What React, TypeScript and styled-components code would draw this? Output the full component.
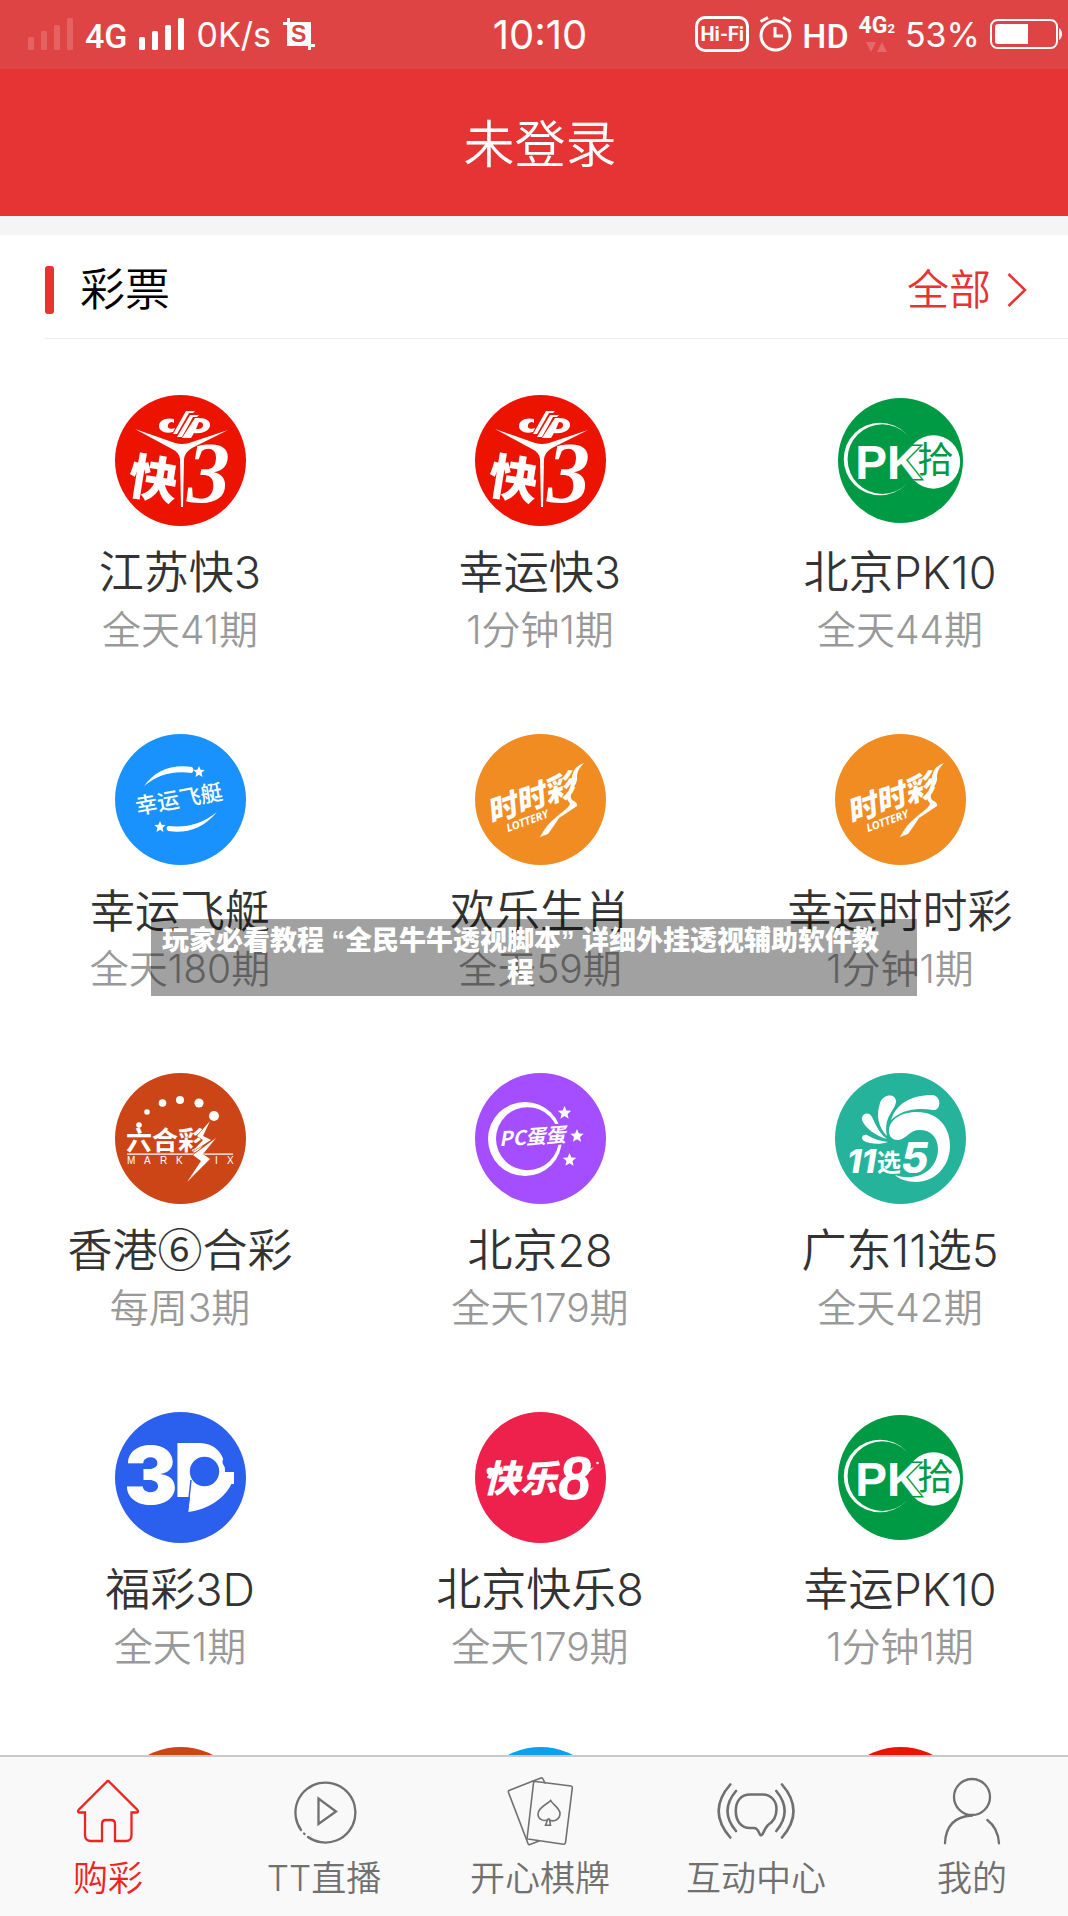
import React, { FC, ReactNode } from 'react'
import styled, { createGlobalStyle, css } from 'styled-components'

const colors = {
  red: '#e63333',
  statusRed: '#df4444',
  active: '#f02222',
  inactive: '#707070',
  text: '#333333',
  muted: '#999999',
}

const cjk = `'Noto Sans CJK SC', sans-serif`

const starPoints = (cx: number, cy: number, r: number) =>
  Array.from({ length: 10 }, (_, i) => {
    const radius = i % 2 ? r * 0.45 : r
    const angle = (Math.PI / 5) * i - Math.PI / 2
    return `${(cx + radius * Math.cos(angle)).toFixed(1)},${(cy + radius * Math.sin(angle)).toFixed(1)}`
  }).join(' ')

/* ---------- lottery logos ---------- */

const KuaiSanLogo = () => (
  <>
    <circle cx="65.5" cy="65.5" r="65.5" fill="#ec1300" />
    <path d="M59 24C50 22 44 26 44 31C44 36 50 39 58 37L60 33C55 35 52 33 53 30C54 27 57 26 59 28Z" />
    <path d="M71 16H80L78 18H74L62 39H58Z" />
    <path d="M75 20H84L82 22H78L67 42H62Z" />
    <path
      fillRule="evenodd"
      d="M80 23H84C91 23 96 26 95 31C94 36 87 39 79 38L76 43H67ZM84 27L81 34C86 34 88 33 88 30C88 28 87 27 84 27Z"
    />
    <path d="M20 34L60 48Q67 50 74 48L113 35L77 53Q70 57 69 64L68 112H66L65 64Q64 57 57 54Z" />
    <text x="14" y="102" fontSize="49" fontWeight="900" transform="rotate(9 40 84)">
      快
    </text>
    <text x="72" y="107" fontSize="86" fontWeight="700" fontStyle="italic" fontFamily="Liberation Serif, serif">
      3
    </text>
  </>
)

const PkLogo = () => (
  <>
    <circle cx="65.5" cy="65.5" r="65.5" fill="#009a44" />
    <circle cx="44" cy="64" r="38" />
    <circle cx="46.5" cy="64" r="36.5" fill="#009a44" />
    <circle cx="100" cy="67" r="28" />
    <text
      x="18"
      y="85"
      fontSize="50"
      fontWeight="700"
      fontFamily="Liberation Sans, sans-serif"
      stroke="#009a44"
      strokeWidth="3"
      paintOrder="stroke"
    >
      PK
    </text>
    <text x="83" y="79" fontSize="38" fontWeight="400" fill="#009a44">
      拾
    </text>
  </>
)

const FeitingLogo = () => (
  <>
    <circle cx="65.5" cy="65.5" r="65.5" fill="#1a92fd" />
    <path d="M29 52C40 37 56 30 77 33Q80 36 77 39C58 36 42 41 29 52Z" />
    <polygon points={starPoints(84, 38, 6)} />
    <text x="20" y="73" fontSize="22" fontWeight="500" transform="rotate(-10 64 65)">
      幸运飞艇
    </text>
    <polygon points={starPoints(45, 93, 6)} />
    <path d="M102 78C88 95 70 100 53 97Q50 94 53 92C72 94 87 90 102 78Z" />
  </>
)

const ShishicaiLogo = () => (
  <>
    <circle cx="65.5" cy="65.5" r="65.5" fill="#f18c23" />
    <text x="10" y="75" fontSize="30" fontWeight="900" fontStyle="italic" transform="rotate(-19 56 64)">
      时时彩
    </text>
    <text
      x="33"
      y="98"
      fontSize="11"
      fontWeight="700"
      fontStyle="italic"
      fontFamily="Noto Sans, sans-serif"
      transform="rotate(-20 33 98)"
    >
      LOTTERY
    </text>
    <path d="M109 29Q99 32 97 42Q96 52 93 60Q91 65 94 68Q97 70 90 76Q77 86 72 92Q67 99 65 103L73 100Q79 92 84 84L102 72Q103 69 97 66Q94 62 98 54Q103 48 102 42Q102 36 109 29Z" />
  </>
)

const MarkSixLogo = () => (
  <>
    <circle cx="65.5" cy="65.5" r="65.5" fill="#cb4516" />
    <circle cx="24" cy="52" r="2.8" />
    <circle cx="32" cy="39" r="2.8" />
    <circle cx="47.5" cy="30" r="3.8" />
    <circle cx="65" cy="27" r="4" />
    <circle cx="84" cy="30" r="4.6" />
    <circle cx="99" cy="43" r="5" />
    <text x="11" y="77" fontSize="26" fontWeight="700">
      六合彩
    </text>
    <path d="M12 80.5H118V81.7H12Z" />
    <g fontSize="10" fontFamily="Liberation Sans, sans-serif">
      <text x="12" y="91">M</text>
      <text x="29" y="91">A</text>
      <text x="45" y="91">R</text>
      <text x="61" y="91">K</text>
      <text x="100" y="91">I</text>
      <text x="112" y="91">X</text>
    </g>
    <path
      d="M95 48L82 63L88 67L77 79L96 67L88 63ZM101 65L78 82L86 88L72 109L95 86L88 81Z"
      stroke="#cb4516"
      strokeWidth="1"
      paintOrder="stroke"
    />
  </>
)

const PcLogo = () => (
  <>
    <circle cx="65.5" cy="65.5" r="65.5" fill="#a54eff" />
    <circle cx="50" cy="66" r="37" />
    <circle cx="52.5" cy="65.7" r="31.5" fill="#a54eff" />
    <path d="M70 52L92 50V71L70 73Z" fill="#a54eff" />
    <text x="24" y="71" fontSize="20" fontWeight="700" fontStyle="italic" transform="rotate(-4 58 64)">
      PC蛋蛋
    </text>
    <polygon points={starPoints(89.5, 40, 7)} />
    <polygon points={starPoints(102, 63, 7)} />
    <polygon points={starPoints(94.5, 87, 7)} />
  </>
)

const ElevenLogo = () => (
  <>
    <circle cx="65.5" cy="65.5" r="65.5" fill="#26b39b" />
    <path d="M53 69C45 72 35 71 29 68C25 65 28 61 32 62C39 66 45 68 53 69Z" />
    <path d="M52 66C41 63 30 55 27 47C26 40 34 38 37 44C41 52 44 60 52 66Z" />
    <path d="M52 63C43 54 41 42 45 30C48 21 60 20 61 28C61 37 48 43 52 63Z" />
    <path d="M56 47C61 32 74 22 98 22C107 24 106 38 98 37C78 34 66 38 56 47Z" />
    <path d="M54 56C56 45 68 39 82 39C103 39 115 54 115 73C115 94 99 109 81 109C72 109 64 106 60 102C85 110 103 95 103 76C103 64 95 57 85 57C74 57 73 65 64 67C57 68 53 62 54 56Z" />
    <g stroke="#26b39b" strokeWidth="2" paintOrder="stroke">
      <text x="12" y="100" fontSize="33" fontWeight="800" fontStyle="italic" fontFamily="Inter, sans-serif">
        11
      </text>
      <text x="42" y="98" fontSize="24" fontWeight="700">
        选
      </text>
      <text x="66" y="100" fontSize="42" fontWeight="800" fontStyle="italic" fontFamily="Inter, sans-serif">
        5
      </text>
    </g>
  </>
)

const ThreeDLogo = () => (
  <>
    <circle cx="65.5" cy="65.5" r="65.5" fill="#2b60ee" />
    <g fontWeight="900" fontFamily="Inter, sans-serif">
      <text x="9" y="92" fontSize="80">3</text>
      <text x="59" y="85" fontSize="74">D</text>
    </g>
    <path d="M72 38H98V76H72Z" />
    <path d="M77 70L73 100C92 98 112 86 118 68Z" />
    <path d="M98 60H119V72H98Z" />
    <circle cx="89.5" cy="59.5" r="14.7" fill="#2b60ee" />
    <circle cx="114" cy="50" r="6.5" fill="#2b60ee" />
    <path d="M76 68L72.5 100" stroke="#2b60ee" strokeWidth="1.5" />
  </>
)

const HappyEightLogo = () => (
  <>
    <circle cx="65.5" cy="65.5" r="65.5" fill="#ed214c" />
    <circle cx="15" cy="59" r="3.5" />
    <text x="8" y="80" fontSize="37" fontWeight="900" fontStyle="italic">
      快乐
    </text>
    <text
      x="84"
      y="86"
      fontSize="62"
      fontWeight="400"
      fontStyle="italic"
      fontFamily="Liberation Serif, serif"
      stroke="#fff"
      strokeWidth="3"
    >
      8
    </text>
    <path d="M106 62L119 55L113 61Z" />
    <circle cx="122.5" cy="51" r="1.3" />
  </>
)

const PlainLogo: FC<{ color: string }> = ({ color }) => (
  <circle cx="65.5" cy="65.5" r="65.5" fill={color} />
)

interface Lottery {
  id: string
  name?: ReactNode
  period?: string
  logo: ReactNode
  size?: number
}

const Enclosed = styled.span`
  font-family: ${cjk};
  line-height: 1;
`

const lotteries: Lottery[] = [
  { id: 'jsk3', name: '江苏快3', period: '全天41期', logo: <KuaiSanLogo /> },
  { id: 'xyk3', name: '幸运快3', period: '1分钟1期', logo: <KuaiSanLogo /> },
  { id: 'bjpk10', name: '北京PK10', period: '全天44期', logo: <PkLogo />, size: 125 },
  { id: 'xyft', name: '幸运飞艇', period: '全天180期', logo: <FeitingLogo /> },
  { id: 'hlsx', name: '欢乐生肖', period: '全天59期', logo: <ShishicaiLogo /> },
  { id: 'xyssc', name: '幸运时时彩', period: '1分钟1期', logo: <ShishicaiLogo /> },
  {
    id: 'lhc',
    name: (
      <>
        香港<Enclosed>⑥</Enclosed>合彩
      </>
    ),
    period: '每周3期',
    logo: <MarkSixLogo />,
  },
  { id: 'bj28', name: '北京28', period: '全天179期', logo: <PcLogo /> },
  { id: 'gd11x5', name: '广东11选5', period: '全天42期', logo: <ElevenLogo /> },
  { id: 'fc3d', name: '福彩3D', period: '全天1期', logo: <ThreeDLogo /> },
  { id: 'bjkl8', name: '北京快乐8', period: '全天179期', logo: <HappyEightLogo /> },
  { id: 'xypk10', name: '幸运PK10', period: '1分钟1期', logo: <PkLogo />, size: 125 },
  { id: 'more1', logo: <PlainLogo color="#cb4516" />, size: 139 },
  { id: 'more2', logo: <PlainLogo color="#0d9ff0" />, size: 139 },
  { id: 'more3', logo: <PlainLogo color="#ec1300" />, size: 139 },
]

const tabs: { label: string; icon: ReactNode }[] = [
  {
    label: '购彩',
    icon: (
      <path d="M38.5 6Q40 4 41.5 6L69.5 34Q71 36.5 68 36.5H63.5V59Q63.5 65 58 65H47V48Q47 44 43 44H38Q34 44 34 48V65H23Q17 65 17 59V36.5H12Q9 36.5 10.5 34Z" />
    ),
  },
  {
    label: 'TT直播',
    icon: (
      <>
        <path d="M24 61A30 30 0 1 0 17 54" />
        <path d="M20 57.5L20.5 58" />
        <path d="M34.5 22.5V48L52 35.5Z" />
      </>
    ),
  },
  {
    label: '开心棋牌',
    icon: (
      <g strokeWidth="1.6">
        <path d="M33 5L9 14.5Q8 15 8.5 16.5L28 67.5Q28.5 69 30 68.5L39 65" />
        <path d="M33 5L41 2Q42.5 1.5 43 3L45 7" />
        <path d="M35.5 5.5L71 10Q72.5 10.3 72.3 12L65.5 66.5Q65 68.5 63.5 68.3L28 63Q27 62.8 27.2 61.5L33.5 7Q33.8 5.3 35.5 5.5Z" />
        <path d="M50.7 24.5C48 28 38 31 38 38C38 44 45 46 48.5 43C52 47 60 44 60 37.5C60 32 53 29 50.7 24.5ZM48 43L45.5 49.3H50.5L49.5 43" />
      </g>
    ),
  },
  {
    label: '互动中心',
    icon: (
      <g strokeWidth="2.6">
        <path d="M34 18.5H47C55 18.5 60.5 25 60.5 33C60.5 42 57 46 52 49C48 53 47 59.5 45 59.5C43 59.5 43 52 38 52H34C25 52 19.8 45 19.8 35C19.8 25 25 18.5 34 18.5Z" />
        <path d="M20 15Q3 35 20 55M60.3 15Q77 35 60.3 55" />
        <path d="M14.3 8.5Q-9 35 14.3 61.5M66 8.5Q89 35 66 61.5" />
      </g>
    ),
  },
  {
    label: '我的',
    icon: (
      <>
        <circle cx="40" cy="21" r="18" />
        <path d="M40 39.5Q14 41 13 67.3" />
        <path d="M55.3 44Q66 52 67 67.3" />
      </>
    ),
  },
]

/* ---------- status bar ---------- */

const SignalBars: FC<{ dim?: boolean }> = ({ dim }) => (
  <svg width="45" height="32" viewBox="0 0 45 32" fill="#fff" opacity={dim ? 0.16 : 1}>
    <rect x="0" y="19" width="6" height="13" rx="1.5" />
    <rect x="13" y="13" width="6" height="19" rx="1.5" />
    <rect x="26" y="7" width="6" height="25" rx="1.5" />
    <rect x="39" y="0" width="6" height="32" rx="1.5" />
  </svg>
)

const ScreenshotIcon = () => (
  <svg width="32" height="32" viewBox="0 0 32 32" fill="#fff">
    <path d="M4 0H7V4H28V26H32V29H28V32H25V28H4V7H0V4H4Z" />
    <text
      x="8"
      y="24"
      fontSize="23"
      fontWeight="700"
      fontFamily="Liberation Sans, sans-serif"
      fill={colors.statusRed}
    >
      S
    </text>
  </svg>
)

const AlarmIcon = () => (
  <svg width="33" height="36" viewBox="0 0 33 36" fill="none" stroke="#fff" strokeWidth="3">
    <circle cx="16.5" cy="19.5" r="14.5" />
    <path d="M16 11V20H24M1.5 5.5L9 1.5M31.5 5.5L24 1.5" />
  </svg>
)

const ArrowsIcon = () => (
  <svg width="22" height="10" viewBox="0 0 22 10" fill="#fff" opacity="0.2">
    <path d="M0 0H10L5 10ZM11 10H21L16 0Z" />
  </svg>
)

const BatteryIcon = () => (
  <svg width="72" height="30" viewBox="0 0 72 30" fill="none">
    <rect x="1" y="1" width="66" height="28" rx="6.5" stroke="#fff" strokeWidth="2" />
    <path d="M8 5H38V25H8Q5 25 5 22V8Q5 5 8 5Z" fill="#fff" />
    <path d="M69 9Q72 11 72 15Q72 19 69 21Z" fill="#fff" />
  </svg>
)

const App: FC = () => (
  <>
    <GlobalStyle />
    <Screen lang="zh-CN">
      <StatusBar>
        <StatusGroup>
          <SignalBars dim />
          <Network>4G</Network>
          <SignalBars />
          <StatusText>0K/s</StatusText>
          <ScreenshotIcon />
        </StatusGroup>
        <Clock>10:10</Clock>
        <StatusGroup alignEnd>
          <HiFi>Hi-Fi</HiFi>
          <AlarmIcon />
          <Network>HD</Network>
          <SecondSim>
            <span>
              4G<small>2</small>
            </span>
            <ArrowsIcon />
          </SecondSim>
          <StatusText>53%</StatusText>
          <BatteryIcon />
        </StatusGroup>
      </StatusBar>
      <Header>
        <Title>未登录</Title>
      </Header>
      <Content>
        <SectionHeader>
          <SectionTitle>彩票</SectionTitle>
          <AllLink href="#all">
            全部
            <svg width="20" height="34" viewBox="0 0 20 34" fill="none" stroke="currentColor" strokeWidth="2.5">
              <path d="M1.5 1L18 17L1.5 33" />
            </svg>
          </AllLink>
        </SectionHeader>
        <Grid>
          {lotteries.map(({ id, name, period, logo, size = 131 }) => (
            <Card key={id} href={`#${id}`}>
              <LogoBox>
                <svg width={size} height={size} viewBox="0 0 131 131" fill="#fff" fontFamily={cjk}>
                  {logo}
                </svg>
              </LogoBox>
              <Name>{name}</Name>
              <Period>{period}</Period>
            </Card>
          ))}
        </Grid>
      </Content>
      <TabBar>
        {tabs.map(({ label, icon }, index) => (
          <Tab key={label} href={`#tab${index}`} active={index === 0}>
            <svg
              width="80"
              height="70"
              viewBox="0 0 80 70"
              fill="none"
              stroke="currentColor"
              strokeWidth="2.3"
              strokeLinecap="round"
            >
              {icon}
            </svg>
            {label}
          </Tab>
        ))}
      </TabBar>
      <Caption>玩家必看教程 “全民牛牛透视脚本” 详细外挂透视辅助软件教程</Caption>
    </Screen>
  </>
)

export default App

const GlobalStyle = createGlobalStyle`
  * {
    box-sizing: border-box;
  }

  body {
    margin: 0;
    overflow: hidden;
    background: #fff;
    font-family: Inter, ${cjk};
    font-weight: 350;
  }

  a {
    color: inherit;
    text-decoration: none;
  }

  svg {
    display: block;
    flex-shrink: 0;
  }
`

// the last few pixels of the screen run past the right edge of the window
const Screen = styled.div`
  position: relative;
  display: flex;
  flex-direction: column;
  width: calc(100% + 12px);
  height: 100vh;
`

const StatusBar = styled.div`
  display: grid;
  grid-template-columns: 1fr auto 1fr;
  align-items: center;
  flex-shrink: 0;
  height: 69px;
  padding: 0 18px 2px;
  background: ${colors.statusRed};
  color: #fff;
  font-weight: 400;
  white-space: nowrap;
`

const StatusGroup = styled.div.withConfig({
  shouldForwardProp: prop => prop !== 'alignEnd',
})<{ alignEnd?: boolean }>`
  display: flex;
  align-items: center;
  gap: 12px;
  padding-left: 10px;
  ${({ alignEnd }) =>
    alignEnd &&
    css`
      justify-content: flex-end;
      gap: 10px;
      padding-left: 0;
    `}
`

const StatusText = styled.span`
  padding-top: 2px;
  font-size: 34px;
  line-height: 40px;
`

const Network = styled.span`
  padding-top: 4px;
  font-family: Roboto, sans-serif;
  font-size: 34px;
  font-weight: 500;
  line-height: 40px;
`

const Clock = styled.time`
  padding-top: 2px;
  font-size: 40px;
  line-height: 48px;
`

const HiFi = styled.span`
  width: 54px;
  height: 36px;
  border: 3px solid #fff;
  border-radius: 10px;
  font-family: Roboto, sans-serif;
  font-size: 20px;
  font-weight: 700;
  line-height: 30px;
  text-align: center;
`

const SecondSim = styled.span`
  display: flex;
  flex-direction: column;
  align-items: center;
  gap: 3px;
  font-family: Roboto, sans-serif;
  font-size: 23px;
  font-weight: 700;
  line-height: 20px;

  small {
    font-size: 13px;
  }
`

const Header = styled.header`
  display: flex;
  align-items: center;
  justify-content: center;
  flex-shrink: 0;
  height: 147px;
  padding-top: 4px;
  background: ${colors.red};
  color: #fff;
`

const Title = styled.h1`
  margin: 0;
  font-size: 51px;
  font-weight: 350;
  line-height: 72px;
`

const Content = styled.main`
  flex: 1;
  min-height: 0;
  overflow: hidden;
  border-top: 19px solid #f5f5f5;
`

const SectionHeader = styled.div`
  display: flex;
  align-items: center;
  justify-content: space-between;
  height: 104px;
  margin-left: 45px;
  padding: 6px 53px 0 0;
  border-bottom: 1px solid #ececec;
`

const SectionTitle = styled.h2`
  display: flex;
  align-items: center;
  gap: 26px;
  margin: 0;
  color: #000;
  font-size: 45px;
  font-weight: 350;
  line-height: 60px;

  &::before {
    content: '';
    width: 9px;
    height: 48px;
    border-radius: 3px;
    background: ${colors.red};
  }
`

const AllLink = styled.a`
  display: flex;
  align-items: center;
  gap: 16px;
  color: ${colors.red};
  font-size: 42px;
  line-height: 60px;
`

const Grid = styled.div`
  display: grid;
  grid-template-columns: repeat(3, 1fr);
  grid-auto-rows: 339px;
`

const Card = styled.a`
  display: flex;
  flex-direction: column;
  align-items: center;
  padding-top: 51px;
`

const LogoBox = styled.div`
  display: flex;
  align-items: center;
  height: 140px;
  margin-bottom: 13px;
`

const Name = styled.span`
  color: ${colors.text};
  font-size: 45px;
  line-height: 60px;
`

const Period = styled.span`
  color: ${colors.muted};
  font-size: 39px;
  line-height: 54px;
`

const TabBar = styled.nav`
  display: flex;
  flex-shrink: 0;
  height: 161px;
  padding-top: 19px;
  border-top: 2px solid #c9c9c9;
  background: #f9f9f9;
`

const Tab = styled.a.withConfig({
  shouldForwardProp: prop => prop !== 'active',
})<{ active: boolean }>`
  && {
    color: ${({ active }) => (active ? colors.active : colors.inactive)};
  }
  display: flex;
  flex: 1;
  flex-direction: column;
  align-items: center;
  gap: 8px;
  font-size: 35px;
  line-height: 48px;
`

const Caption = styled.div`
  position: absolute;
  top: 919px;
  left: 151px;
  right: 163px;
  padding: 6px 38px 7px 11px;
  background: rgba(0, 0, 0, 0.37);
  color: #fff;
  font-family: 'Liberation Sans', ${cjk};
  font-size: 27px;
  font-weight: 900;
  line-height: 32px;
  text-align: center;
`
